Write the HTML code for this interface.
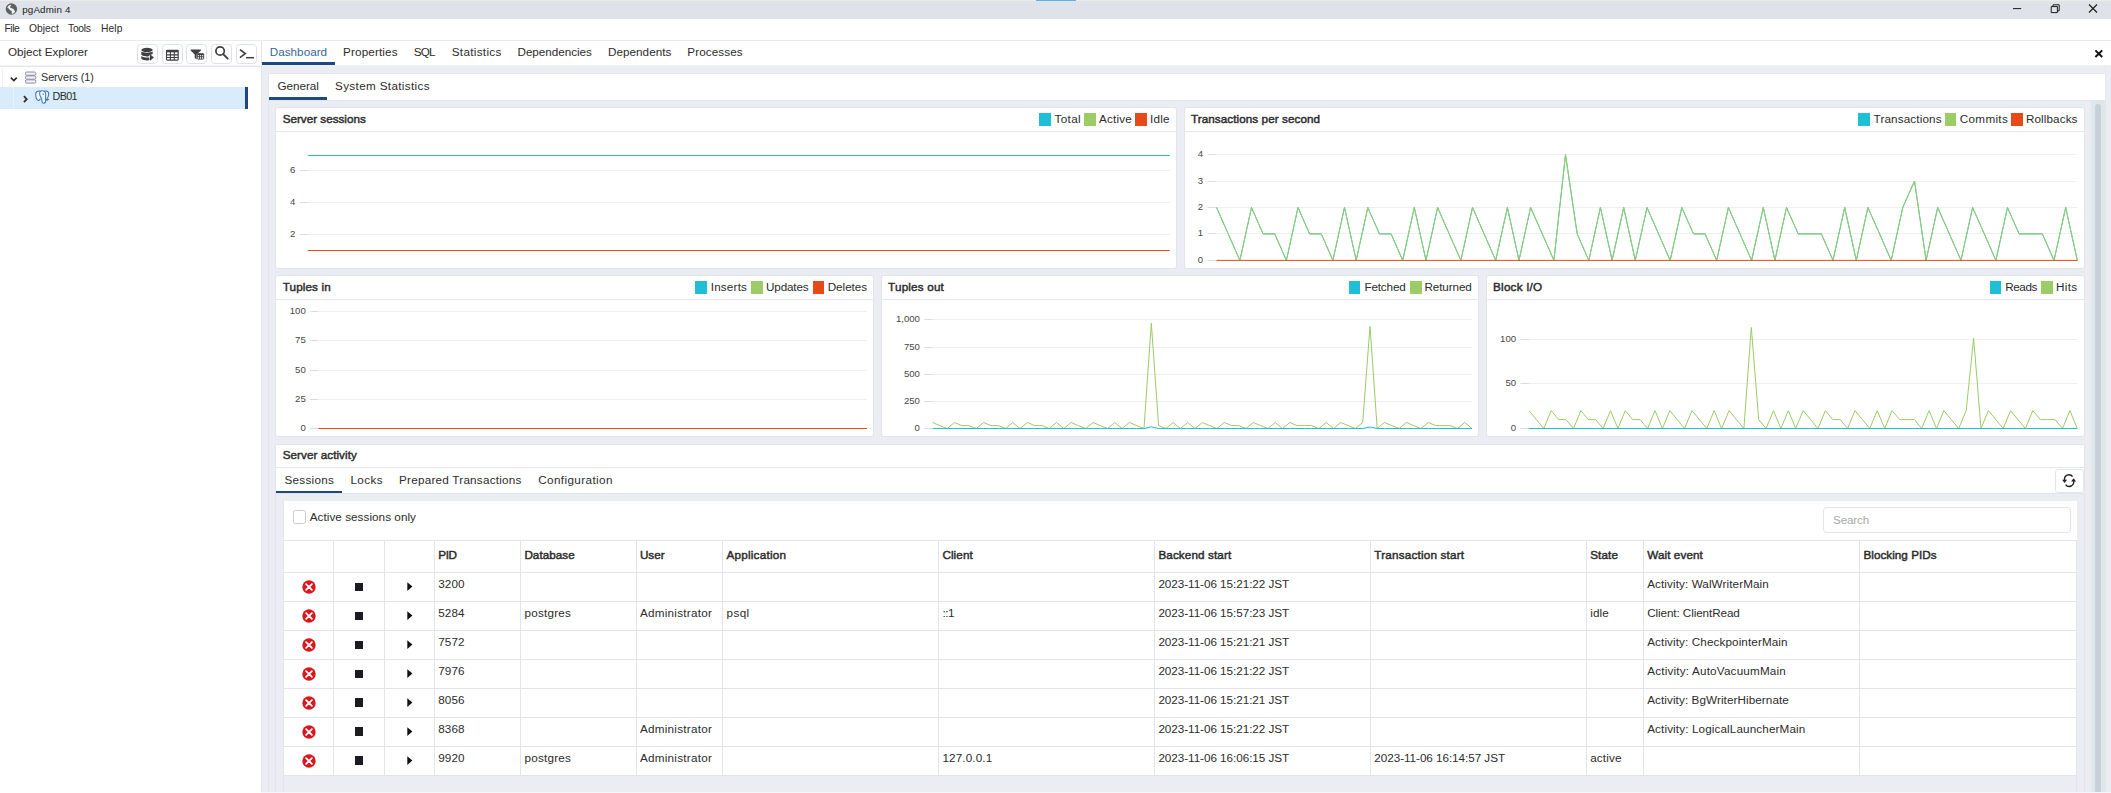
<!DOCTYPE html>
<html><head><meta charset="utf-8"><title>pgAdmin 4</title>
<style>
html,body{margin:0;padding:0;}
body{width:2111px;height:793px;overflow:hidden;position:relative;background:#fff;font-family:"Liberation Sans",sans-serif;}
.b{position:absolute;box-sizing:border-box;}
.t{position:absolute;white-space:pre;}
#charts{position:absolute;left:0;top:0;}
</style></head><body>
<div class="b" style="left:0.00px;top:0.00px;width:2111.00px;height:19.00px;background:#dfe3e9;"></div>
<div class="b" style="left:0.00px;top:0.00px;width:2111.00px;height:1.00px;background:#ececee;"></div>
<div class="b" style="left:1036.00px;top:0.00px;width:40.00px;height:1.00px;background:#5ab4e6;"></div>
<span class="t" style="left:22.20px;top:4.60px;font-size:9.8px;line-height:9.8px;color:#1a1a1a;letter-spacing:0.168px;">pgAdmin 4</span>
<div class="b" style="left:0.00px;top:19.00px;width:2111.00px;height:21.00px;background:#fff;"></div>
<div class="b" style="left:0.00px;top:40.00px;width:2111.00px;height:1.00px;background:#e9eaf1;"></div>
<span class="t" style="left:4.50px;top:23.88px;font-size:10.3px;line-height:10.3px;color:#2c2c2c;letter-spacing:-0.432px;">File</span>
<span class="t" style="left:29.10px;top:23.88px;font-size:10.3px;line-height:10.3px;color:#2c2c2c;letter-spacing:-0.014px;">Object</span>
<span class="t" style="left:68.00px;top:23.88px;font-size:10.3px;line-height:10.3px;color:#2c2c2c;letter-spacing:-0.261px;">Tools</span>
<span class="t" style="left:101.00px;top:23.88px;font-size:10.3px;line-height:10.3px;color:#2c2c2c;letter-spacing:0.072px;">Help</span>
<div class="b" style="left:0.00px;top:41.00px;width:261.00px;height:752.00px;background:#fff;"></div>
<div class="b" style="left:0.00px;top:65.00px;width:260.00px;height:1.00px;background:#f3f4f7;"></div>
<div class="b" style="left:0.00px;top:66.00px;width:260.00px;height:1.00px;background:#e3e6ec;"></div>
<span class="t" style="left:8.00px;top:46.00px;font-size:11.7px;line-height:11.7px;color:#2c2c2c;letter-spacing:-0.052px;">Object Explorer</span>
<div class="b" style="left:136.90px;top:44.00px;width:21.00px;height:20.00px;border:1px solid #dde2ea;border-radius:3.5px;background:#fff;"></div>
<div class="b" style="left:161.75px;top:44.00px;width:21.00px;height:20.00px;border:1px solid #dde2ea;border-radius:3.5px;background:#fff;"></div>
<div class="b" style="left:186.25px;top:44.00px;width:21.00px;height:20.00px;border:1px solid #dde2ea;border-radius:3.5px;background:#fff;"></div>
<div class="b" style="left:210.90px;top:44.00px;width:21.00px;height:20.00px;border:1px solid #dde2ea;border-radius:3.5px;background:#fff;"></div>
<div class="b" style="left:235.90px;top:44.00px;width:21.00px;height:20.00px;border:1px solid #dde2ea;border-radius:3.5px;background:#fff;"></div>
<div class="b" style="left:2.00px;top:69.00px;width:1.00px;height:39.70px;background:#eef0f3;"></div>
<div class="b" style="left:0.00px;top:86.80px;width:247.60px;height:21.90px;background:#d9ecfb;"></div>
<div class="b" style="left:245.00px;top:86.80px;width:2.60px;height:21.90px;background:#1f477c;"></div>
<div class="b" style="left:13.00px;top:86.80px;width:1.00px;height:21.90px;background:#e8f4fc;"></div>
<span class="t" style="left:41.00px;top:71.61px;font-size:10.8px;line-height:10.8px;color:#2c2c2c;letter-spacing:-0.061px;">Servers (1)</span>
<span class="t" style="left:52.60px;top:91.11px;font-size:10.8px;line-height:10.8px;color:#2c2c2c;letter-spacing:-0.672px;">DB01</span>
<div class="b" style="left:261.00px;top:41.00px;width:1850.00px;height:24.00px;background:#fff;"></div>
<div class="b" style="left:261.00px;top:65.00px;width:1850.00px;height:728.00px;background:#ecedf2;"></div>
<div class="b" style="left:261.00px;top:65.00px;width:1850.00px;height:1.00px;background:#eef0f4;"></div>
<div class="b" style="left:261px;top:41px;width:1px;height:752px;background:#dfe5ea"></div>
<div class="b" style="left:261.00px;top:792.00px;width:1850.00px;height:1.00px;background:#f5f6f9;"></div>
<span class="t" style="left:269.75px;top:46.10px;font-size:11.7px;line-height:11.7px;color:#36679a;letter-spacing:0.020px;">Dashboard</span>
<span class="t" style="left:343.00px;top:46.10px;font-size:11.7px;line-height:11.7px;color:#2c2c2c;letter-spacing:0.147px;">Properties</span>
<span class="t" style="left:413.75px;top:46.10px;font-size:11.7px;line-height:11.7px;color:#2c2c2c;letter-spacing:-0.756px;">SQL</span>
<span class="t" style="left:451.75px;top:46.10px;font-size:11.7px;line-height:11.7px;color:#2c2c2c;letter-spacing:0.315px;">Statistics</span>
<span class="t" style="left:517.50px;top:46.10px;font-size:11.7px;line-height:11.7px;color:#2c2c2c;letter-spacing:-0.037px;">Dependencies</span>
<span class="t" style="left:608.00px;top:46.10px;font-size:11.7px;line-height:11.7px;color:#2c2c2c;letter-spacing:0.033px;">Dependents</span>
<span class="t" style="left:687.25px;top:46.10px;font-size:11.7px;line-height:11.7px;color:#2c2c2c;letter-spacing:0.097px;">Processes</span>
<div class="b" style="left:261.50px;top:62.25px;width:73.25px;height:2.65px;background:#1c4a80;"></div>
<div class="b" style="left:268.50px;top:73.80px;width:1836.30px;height:26.00px;background:#fff;box-shadow:0 0 0 1px #e3e7ed;"></div>
<span class="t" style="left:277.50px;top:79.70px;font-size:11.7px;line-height:11.7px;color:#2c2c2c;letter-spacing:-0.038px;">General</span>
<span class="t" style="left:335.00px;top:79.70px;font-size:11.7px;line-height:11.7px;color:#2c2c2c;letter-spacing:0.349px;">System Statistics</span>
<div class="b" style="left:269.00px;top:97.25px;width:58.25px;height:2.55px;background:#1c4a80;"></div>
<div class="b" style="left:2091.00px;top:100.00px;width:14.00px;height:692.00px;background:#e0e7eb;"></div>
<div class="b" style="left:2105px;top:66px;width:1px;height:726px;background:#e3e8ec"></div>
<div class="b" style="left:2094.50px;top:104.00px;width:6.50px;height:688.00px;background:#c8d0db;border-radius:3px 3px 0 0;"></div>
<div class="b" style="left:268px;top:100px;width:1px;height:692px;background:#e0e6eb"></div>
<div class="b" style="left:276.30px;top:107.80px;width:899.90px;height:159.90px;background:#fff;box-shadow:0 0 0 1px #e1e5eb;border-radius:2px;"></div>
<div class="b" style="left:276px;top:131px;width:900px;height:1px;background:#e4e7ed"></div>
<span class="t" style="left:282.70px;top:112.80px;font-size:11.7px;line-height:11.7px;color:#2c2c2c;letter-spacing:-0.002px;-webkit-text-stroke:0.45px currentColor;">Server sessions</span>
<div class="b" style="left:1039.30px;top:112.60px;width:11.80px;height:13.30px;background:#1fbfd6;"></div>
<span class="t" style="left:1054.40px;top:112.80px;font-size:11.7px;line-height:11.7px;color:#2c2c2c;letter-spacing:0.396px;">Total</span>
<div class="b" style="left:1084.00px;top:112.60px;width:11.80px;height:13.30px;background:#9ccc65;"></div>
<span class="t" style="left:1099.10px;top:112.80px;font-size:11.7px;line-height:11.7px;color:#2c2c2c;letter-spacing:0.188px;">Active</span>
<div class="b" style="left:1135.20px;top:112.60px;width:11.80px;height:13.30px;background:#e64a19;"></div>
<span class="t" style="left:1150.10px;top:112.80px;font-size:11.7px;line-height:11.7px;color:#2c2c2c;letter-spacing:0.179px;">Idle</span>
<div class="b" style="left:1184.50px;top:107.80px;width:899.50px;height:159.90px;background:#fff;box-shadow:0 0 0 1px #e1e5eb;border-radius:2px;"></div>
<div class="b" style="left:1184px;top:131px;width:900px;height:1px;background:#e4e7ed"></div>
<span class="t" style="left:1190.90px;top:112.80px;font-size:11.7px;line-height:11.7px;color:#2c2c2c;letter-spacing:0.073px;-webkit-text-stroke:0.45px currentColor;">Transactions per second</span>
<div class="b" style="left:1857.90px;top:112.60px;width:11.80px;height:13.30px;background:#1fbfd6;"></div>
<span class="t" style="left:1873.60px;top:112.80px;font-size:11.7px;line-height:11.7px;color:#2c2c2c;letter-spacing:0.132px;">Transactions</span>
<div class="b" style="left:1944.70px;top:112.60px;width:11.80px;height:13.30px;background:#9ccc65;"></div>
<span class="t" style="left:1959.80px;top:112.80px;font-size:11.7px;line-height:11.7px;color:#2c2c2c;letter-spacing:0.308px;">Commits</span>
<div class="b" style="left:2011.30px;top:112.60px;width:11.80px;height:13.30px;background:#e64a19;"></div>
<span class="t" style="left:2025.90px;top:112.80px;font-size:11.7px;line-height:11.7px;color:#2c2c2c;letter-spacing:0.110px;">Rollbacks</span>
<div class="b" style="left:276.30px;top:276.20px;width:597.20px;height:160.00px;background:#fff;box-shadow:0 0 0 1px #e1e5eb;border-radius:2px;"></div>
<div class="b" style="left:276px;top:299px;width:598px;height:1px;background:#e4e7ed"></div>
<span class="t" style="left:282.70px;top:281.20px;font-size:11.7px;line-height:11.7px;color:#2c2c2c;letter-spacing:0.120px;-webkit-text-stroke:0.45px currentColor;">Tuples in</span>
<div class="b" style="left:695.10px;top:281.00px;width:11.80px;height:13.30px;background:#1fbfd6;"></div>
<span class="t" style="left:710.70px;top:281.20px;font-size:11.7px;line-height:11.7px;color:#2c2c2c;letter-spacing:0.198px;">Inserts</span>
<div class="b" style="left:750.80px;top:281.00px;width:11.80px;height:13.30px;background:#9ccc65;"></div>
<span class="t" style="left:766.00px;top:281.20px;font-size:11.7px;line-height:11.7px;color:#2c2c2c;letter-spacing:-0.146px;">Updates</span>
<div class="b" style="left:812.60px;top:281.00px;width:11.80px;height:13.30px;background:#e64a19;"></div>
<span class="t" style="left:827.70px;top:281.20px;font-size:11.7px;line-height:11.7px;color:#2c2c2c;letter-spacing:-0.029px;">Deletes</span>
<div class="b" style="left:881.70px;top:276.20px;width:596.80px;height:160.00px;background:#fff;box-shadow:0 0 0 1px #e1e5eb;border-radius:2px;"></div>
<div class="b" style="left:882px;top:299px;width:596px;height:1px;background:#e4e7ed"></div>
<span class="t" style="left:888.10px;top:281.20px;font-size:11.7px;line-height:11.7px;color:#2c2c2c;letter-spacing:0.178px;-webkit-text-stroke:0.45px currentColor;">Tuples out</span>
<div class="b" style="left:1348.70px;top:281.00px;width:11.80px;height:13.30px;background:#1fbfd6;"></div>
<span class="t" style="left:1364.40px;top:281.20px;font-size:11.7px;line-height:11.7px;color:#2c2c2c;letter-spacing:-0.146px;">Fetched</span>
<div class="b" style="left:1410.40px;top:281.00px;width:11.80px;height:13.30px;background:#9ccc65;"></div>
<span class="t" style="left:1424.50px;top:281.20px;font-size:11.7px;line-height:11.7px;color:#2c2c2c;letter-spacing:-0.105px;">Returned</span>
<div class="b" style="left:1486.70px;top:276.20px;width:597.30px;height:160.00px;background:#fff;box-shadow:0 0 0 1px #e1e5eb;border-radius:2px;"></div>
<div class="b" style="left:1487px;top:299px;width:597px;height:1px;background:#e4e7ed"></div>
<span class="t" style="left:1493.10px;top:281.20px;font-size:11.7px;line-height:11.7px;color:#2c2c2c;letter-spacing:0.205px;-webkit-text-stroke:0.45px currentColor;">Block I/O</span>
<div class="b" style="left:1989.50px;top:281.00px;width:11.80px;height:13.30px;background:#1fbfd6;"></div>
<span class="t" style="left:2005.20px;top:281.20px;font-size:11.7px;line-height:11.7px;color:#2c2c2c;letter-spacing:-0.380px;">Reads</span>
<div class="b" style="left:2040.90px;top:281.00px;width:11.80px;height:13.30px;background:#9ccc65;"></div>
<span class="t" style="left:2056.00px;top:281.20px;font-size:11.7px;line-height:11.7px;color:#2c2c2c;letter-spacing:0.350px;">Hits</span>
<span class="t" style="left:289.96px;top:164.77px;font-size:9.6px;line-height:9.6px;color:#484848;">6</span>
<span class="t" style="left:289.96px;top:196.77px;font-size:9.6px;line-height:9.6px;color:#484848;">4</span>
<span class="t" style="left:289.96px;top:228.77px;font-size:9.6px;line-height:9.6px;color:#484848;">2</span>
<span class="t" style="left:1197.86px;top:254.77px;font-size:9.6px;line-height:9.6px;color:#484848;">0</span>
<span class="t" style="left:1197.86px;top:227.77px;font-size:9.6px;line-height:9.6px;color:#484848;">1</span>
<span class="t" style="left:1197.86px;top:201.77px;font-size:9.6px;line-height:9.6px;color:#484848;">2</span>
<span class="t" style="left:1197.86px;top:175.77px;font-size:9.6px;line-height:9.6px;color:#484848;">3</span>
<span class="t" style="left:1197.86px;top:148.77px;font-size:9.6px;line-height:9.6px;color:#484848;">4</span>
<span class="t" style="left:289.78px;top:305.77px;font-size:9.6px;line-height:9.6px;color:#484848;">100</span>
<span class="t" style="left:295.12px;top:334.77px;font-size:9.6px;line-height:9.6px;color:#484848;">75</span>
<span class="t" style="left:295.12px;top:364.77px;font-size:9.6px;line-height:9.6px;color:#484848;">50</span>
<span class="t" style="left:295.12px;top:393.77px;font-size:9.6px;line-height:9.6px;color:#484848;">25</span>
<span class="t" style="left:300.46px;top:422.77px;font-size:9.6px;line-height:9.6px;color:#484848;">0</span>
<span class="t" style="left:895.88px;top:313.77px;font-size:9.6px;line-height:9.6px;color:#484848;">1,000</span>
<span class="t" style="left:903.88px;top:341.77px;font-size:9.6px;line-height:9.6px;color:#484848;">750</span>
<span class="t" style="left:903.88px;top:368.77px;font-size:9.6px;line-height:9.6px;color:#484848;">500</span>
<span class="t" style="left:903.88px;top:395.77px;font-size:9.6px;line-height:9.6px;color:#484848;">250</span>
<span class="t" style="left:914.56px;top:422.77px;font-size:9.6px;line-height:9.6px;color:#484848;">0</span>
<span class="t" style="left:1500.08px;top:333.77px;font-size:9.6px;line-height:9.6px;color:#484848;">100</span>
<span class="t" style="left:1505.42px;top:377.77px;font-size:9.6px;line-height:9.6px;color:#484848;">50</span>
<span class="t" style="left:1510.76px;top:422.77px;font-size:9.6px;line-height:9.6px;color:#484848;">0</span>
<div class="b" style="left:276.30px;top:445.00px;width:1807.70px;height:48.20px;background:#fff;box-shadow:0 0 0 1px #e1e5eb;"></div>
<div class="b" style="left:276px;top:467px;width:1808px;height:1px;background:#e4e7ed"></div>
<span class="t" style="left:282.70px;top:449.30px;font-size:11.7px;line-height:11.7px;color:#2c2c2c;letter-spacing:0.052px;-webkit-text-stroke:0.45px currentColor;">Server activity</span>
<span class="t" style="left:284.40px;top:474.10px;font-size:11.7px;line-height:11.7px;color:#2c2c2c;letter-spacing:0.304px;">Sessions</span>
<span class="t" style="left:350.40px;top:474.10px;font-size:11.7px;line-height:11.7px;color:#2c2c2c;letter-spacing:0.434px;">Locks</span>
<span class="t" style="left:399.10px;top:474.10px;font-size:11.7px;line-height:11.7px;color:#2c2c2c;letter-spacing:0.234px;">Prepared Transactions</span>
<span class="t" style="left:538.20px;top:474.10px;font-size:11.7px;line-height:11.7px;color:#2c2c2c;letter-spacing:0.400px;">Configuration</span>
<div class="b" style="left:276.30px;top:490.70px;width:65.80px;height:2.50px;background:#1c4a80;"></div>
<div class="b" style="left:2055.00px;top:468.50px;width:28.50px;height:24.70px;background:#fff;border:1px solid #e3e6ec;border-radius:3px;"></div>
<div class="b" style="left:275px;top:493px;width:1px;height:299px;background:#e0e6eb"></div>
<div class="b" style="left:2084px;top:493px;width:1px;height:299px;background:#e0e6eb"></div>
<div class="b" style="left:2076px;top:775px;width:1px;height:17px;background:#e0e6eb"></div>
<div class="b" style="left:283.00px;top:501.00px;width:1794.00px;height:274.50px;background:#fff;"></div>
<div class="b" style="left:283px;top:501px;width:1px;height:291px;background:#e0e6eb"></div>
<div class="b" style="left:292.60px;top:510.30px;width:13.40px;height:13.40px;background:#fff;border:1px solid #c9cdd4;border-radius:2.5px;"></div>
<span class="t" style="left:309.70px;top:511.20px;font-size:11.7px;line-height:11.7px;color:#2c2c2c;letter-spacing:0.055px;">Active sessions only</span>
<div class="b" style="left:1823.00px;top:507.00px;width:248.00px;height:26.00px;background:#fff;border:1px solid #e2e5eb;border-radius:4px;"></div>
<span class="t" style="left:1833.10px;top:513.70px;font-size:11.7px;line-height:11.7px;color:#a9a9a9;letter-spacing:-0.195px;">Search</span>
<div class="b" style="left:283px;top:540px;width:1794px;height:1px;background:#e1e4ea"></div>
<div class="b" style="left:283px;top:572px;width:1794px;height:1px;background:#e1e4ea"></div>
<div class="b" style="left:283px;top:601px;width:1794px;height:1px;background:#e1e4ea"></div>
<div class="b" style="left:283px;top:630px;width:1794px;height:1px;background:#e1e4ea"></div>
<div class="b" style="left:283px;top:659px;width:1794px;height:1px;background:#e1e4ea"></div>
<div class="b" style="left:283px;top:688px;width:1794px;height:1px;background:#e1e4ea"></div>
<div class="b" style="left:283px;top:717px;width:1794px;height:1px;background:#e1e4ea"></div>
<div class="b" style="left:283px;top:746px;width:1794px;height:1px;background:#e1e4ea"></div>
<div class="b" style="left:283px;top:775px;width:1794px;height:1px;background:#e1e4ea"></div>
<div class="b" style="left:283px;top:540px;width:1px;height:236px;background:#e1e4ea"></div>
<div class="b" style="left:333px;top:540px;width:1px;height:236px;background:#e1e4ea"></div>
<div class="b" style="left:384px;top:540px;width:1px;height:236px;background:#e1e4ea"></div>
<div class="b" style="left:434px;top:540px;width:1px;height:236px;background:#e1e4ea"></div>
<div class="b" style="left:520px;top:540px;width:1px;height:236px;background:#e1e4ea"></div>
<div class="b" style="left:636px;top:540px;width:1px;height:236px;background:#e1e4ea"></div>
<div class="b" style="left:722px;top:540px;width:1px;height:236px;background:#e1e4ea"></div>
<div class="b" style="left:938px;top:540px;width:1px;height:236px;background:#e1e4ea"></div>
<div class="b" style="left:1154px;top:540px;width:1px;height:236px;background:#e1e4ea"></div>
<div class="b" style="left:1370px;top:540px;width:1px;height:236px;background:#e1e4ea"></div>
<div class="b" style="left:1586px;top:540px;width:1px;height:236px;background:#e1e4ea"></div>
<div class="b" style="left:1643px;top:540px;width:1px;height:236px;background:#e1e4ea"></div>
<div class="b" style="left:1859px;top:540px;width:1px;height:236px;background:#e1e4ea"></div>
<div class="b" style="left:2076px;top:540px;width:1px;height:236px;background:#e1e4ea"></div>
<span class="t" style="left:438.30px;top:549.10px;font-size:11.7px;line-height:11.7px;color:#2c2c2c;letter-spacing:-0.402px;-webkit-text-stroke:0.45px currentColor;">PID</span>
<span class="t" style="left:524.40px;top:549.10px;font-size:11.7px;line-height:11.7px;color:#2c2c2c;letter-spacing:0.031px;-webkit-text-stroke:0.45px currentColor;">Database</span>
<span class="t" style="left:639.90px;top:549.10px;font-size:11.7px;line-height:11.7px;color:#2c2c2c;letter-spacing:0.032px;-webkit-text-stroke:0.45px currentColor;">User</span>
<span class="t" style="left:726.50px;top:549.10px;font-size:11.7px;line-height:11.7px;color:#2c2c2c;letter-spacing:0.226px;-webkit-text-stroke:0.45px currentColor;">Application</span>
<span class="t" style="left:942.40px;top:549.10px;font-size:11.7px;line-height:11.7px;color:#2c2c2c;letter-spacing:0.097px;-webkit-text-stroke:0.45px currentColor;">Client</span>
<span class="t" style="left:1158.40px;top:549.10px;font-size:11.7px;line-height:11.7px;color:#2c2c2c;letter-spacing:0.113px;-webkit-text-stroke:0.45px currentColor;">Backend start</span>
<span class="t" style="left:1374.30px;top:549.10px;font-size:11.7px;line-height:11.7px;color:#2c2c2c;letter-spacing:0.200px;-webkit-text-stroke:0.45px currentColor;">Transaction start</span>
<span class="t" style="left:1590.20px;top:549.10px;font-size:11.7px;line-height:11.7px;color:#2c2c2c;letter-spacing:0.120px;-webkit-text-stroke:0.45px currentColor;">State</span>
<span class="t" style="left:1647.20px;top:549.10px;font-size:11.7px;line-height:11.7px;color:#2c2c2c;letter-spacing:0.096px;-webkit-text-stroke:0.45px currentColor;">Wait event</span>
<span class="t" style="left:1863.50px;top:549.10px;font-size:11.7px;line-height:11.7px;color:#2c2c2c;letter-spacing:0.023px;-webkit-text-stroke:0.45px currentColor;">Blocking PIDs</span>
<span class="t" style="left:438.30px;top:578.30px;font-size:11.7px;line-height:11.7px;color:#2c2c2c;letter-spacing:0.057px;">3200</span>
<span class="t" style="left:1158.40px;top:578.30px;font-size:11.7px;line-height:11.7px;color:#2c2c2c;letter-spacing:-0.042px;">2023-11-06 15:21:22 JST</span>
<span class="t" style="left:1647.20px;top:578.30px;font-size:11.7px;line-height:11.7px;color:#2c2c2c;letter-spacing:0.095px;">Activity: WalWriterMain</span>
<svg class="b" style="left:301.5px;top:579.8px" width="14" height="14" viewBox="0 0 14 14"><circle cx="7" cy="7" r="6.7" fill="#d7191f"/><path d="M4.1 4.1l5.800 5.800M9.900 4.100l-5.800 5.800" stroke="#fff" stroke-width="1.700" stroke-linecap="round" fill="none"/></svg>
<div class="b" style="left:354.70px;top:582.65px;width:8.30px;height:8.30px;background:#1b1b22;"></div>
<svg class="b" style="left:406.6px;top:582.2px" width="6" height="9.2" viewBox="0 0 6 9.2"><path d="M0.3 0.3L5.4 4.6L0.3 8.9z" fill="#111"/></svg>
<span class="t" style="left:438.30px;top:607.26px;font-size:11.7px;line-height:11.7px;color:#2c2c2c;letter-spacing:0.057px;">5284</span>
<span class="t" style="left:524.40px;top:607.26px;font-size:11.7px;line-height:11.7px;color:#2c2c2c;letter-spacing:0.246px;">postgres</span>
<span class="t" style="left:639.90px;top:607.26px;font-size:11.7px;line-height:11.7px;color:#2c2c2c;letter-spacing:0.256px;">Administrator</span>
<span class="t" style="left:726.50px;top:607.26px;font-size:11.7px;line-height:11.7px;color:#2c2c2c;letter-spacing:0.412px;">psql</span>
<span class="t" style="left:942.40px;top:607.26px;font-size:11.7px;line-height:11.7px;color:#2c2c2c;letter-spacing:-0.404px;">::1</span>
<span class="t" style="left:1158.40px;top:607.26px;font-size:11.7px;line-height:11.7px;color:#2c2c2c;letter-spacing:-0.042px;">2023-11-06 15:57:23 JST</span>
<span class="t" style="left:1590.20px;top:607.26px;font-size:11.7px;line-height:11.7px;color:#2c2c2c;letter-spacing:0.095px;">idle</span>
<span class="t" style="left:1647.20px;top:607.26px;font-size:11.7px;line-height:11.7px;color:#2c2c2c;letter-spacing:-0.094px;">Client: ClientRead</span>
<svg class="b" style="left:301.5px;top:608.8px" width="14" height="14" viewBox="0 0 14 14"><circle cx="7" cy="7" r="6.7" fill="#d7191f"/><path d="M4.1 4.1l5.800 5.800M9.900 4.100l-5.800 5.800" stroke="#fff" stroke-width="1.700" stroke-linecap="round" fill="none"/></svg>
<div class="b" style="left:354.70px;top:611.61px;width:8.30px;height:8.30px;background:#1b1b22;"></div>
<svg class="b" style="left:406.6px;top:611.2px" width="6" height="9.2" viewBox="0 0 6 9.2"><path d="M0.3 0.3L5.4 4.6L0.3 8.9z" fill="#111"/></svg>
<span class="t" style="left:438.30px;top:636.22px;font-size:11.7px;line-height:11.7px;color:#2c2c2c;letter-spacing:0.057px;">7572</span>
<span class="t" style="left:1158.40px;top:636.22px;font-size:11.7px;line-height:11.7px;color:#2c2c2c;letter-spacing:-0.042px;">2023-11-06 15:21:21 JST</span>
<span class="t" style="left:1647.20px;top:636.22px;font-size:11.7px;line-height:11.7px;color:#2c2c2c;letter-spacing:0.106px;">Activity: CheckpointerMain</span>
<svg class="b" style="left:301.5px;top:637.7px" width="14" height="14" viewBox="0 0 14 14"><circle cx="7" cy="7" r="6.7" fill="#d7191f"/><path d="M4.1 4.1l5.800 5.800M9.900 4.100l-5.800 5.800" stroke="#fff" stroke-width="1.700" stroke-linecap="round" fill="none"/></svg>
<div class="b" style="left:354.70px;top:640.57px;width:8.30px;height:8.30px;background:#1b1b22;"></div>
<svg class="b" style="left:406.6px;top:640.1px" width="6" height="9.2" viewBox="0 0 6 9.2"><path d="M0.3 0.3L5.4 4.6L0.3 8.9z" fill="#111"/></svg>
<span class="t" style="left:438.30px;top:665.18px;font-size:11.7px;line-height:11.7px;color:#2c2c2c;letter-spacing:0.057px;">7976</span>
<span class="t" style="left:1158.40px;top:665.18px;font-size:11.7px;line-height:11.7px;color:#2c2c2c;letter-spacing:-0.042px;">2023-11-06 15:21:22 JST</span>
<span class="t" style="left:1647.20px;top:665.18px;font-size:11.7px;line-height:11.7px;color:#2c2c2c;letter-spacing:0.192px;">Activity: AutoVacuumMain</span>
<svg class="b" style="left:301.5px;top:666.7px" width="14" height="14" viewBox="0 0 14 14"><circle cx="7" cy="7" r="6.7" fill="#d7191f"/><path d="M4.1 4.1l5.800 5.800M9.900 4.100l-5.800 5.800" stroke="#fff" stroke-width="1.700" stroke-linecap="round" fill="none"/></svg>
<div class="b" style="left:354.70px;top:669.53px;width:8.30px;height:8.30px;background:#1b1b22;"></div>
<svg class="b" style="left:406.6px;top:669.1px" width="6" height="9.2" viewBox="0 0 6 9.2"><path d="M0.3 0.3L5.4 4.6L0.3 8.9z" fill="#111"/></svg>
<span class="t" style="left:438.30px;top:694.14px;font-size:11.7px;line-height:11.7px;color:#2c2c2c;letter-spacing:0.057px;">8056</span>
<span class="t" style="left:1158.40px;top:694.14px;font-size:11.7px;line-height:11.7px;color:#2c2c2c;letter-spacing:-0.042px;">2023-11-06 15:21:21 JST</span>
<span class="t" style="left:1647.20px;top:694.14px;font-size:11.7px;line-height:11.7px;color:#2c2c2c;letter-spacing:0.085px;">Activity: BgWriterHibernate</span>
<svg class="b" style="left:301.5px;top:695.6px" width="14" height="14" viewBox="0 0 14 14"><circle cx="7" cy="7" r="6.7" fill="#d7191f"/><path d="M4.1 4.1l5.800 5.800M9.900 4.100l-5.800 5.800" stroke="#fff" stroke-width="1.700" stroke-linecap="round" fill="none"/></svg>
<div class="b" style="left:354.70px;top:698.49px;width:8.30px;height:8.30px;background:#1b1b22;"></div>
<svg class="b" style="left:406.6px;top:698.0px" width="6" height="9.2" viewBox="0 0 6 9.2"><path d="M0.3 0.3L5.4 4.6L0.3 8.9z" fill="#111"/></svg>
<span class="t" style="left:438.30px;top:723.10px;font-size:11.7px;line-height:11.7px;color:#2c2c2c;letter-spacing:0.057px;">8368</span>
<span class="t" style="left:639.90px;top:723.10px;font-size:11.7px;line-height:11.7px;color:#2c2c2c;letter-spacing:0.256px;">Administrator</span>
<span class="t" style="left:1158.40px;top:723.10px;font-size:11.7px;line-height:11.7px;color:#2c2c2c;letter-spacing:-0.042px;">2023-11-06 15:21:22 JST</span>
<span class="t" style="left:1647.20px;top:723.10px;font-size:11.7px;line-height:11.7px;color:#2c2c2c;letter-spacing:0.122px;">Activity: LogicalLauncherMain</span>
<svg class="b" style="left:301.5px;top:724.6px" width="14" height="14" viewBox="0 0 14 14"><circle cx="7" cy="7" r="6.7" fill="#d7191f"/><path d="M4.1 4.1l5.800 5.800M9.900 4.100l-5.800 5.800" stroke="#fff" stroke-width="1.700" stroke-linecap="round" fill="none"/></svg>
<div class="b" style="left:354.70px;top:727.45px;width:8.30px;height:8.30px;background:#1b1b22;"></div>
<svg class="b" style="left:406.6px;top:727.0px" width="6" height="9.2" viewBox="0 0 6 9.2"><path d="M0.3 0.3L5.4 4.6L0.3 8.9z" fill="#111"/></svg>
<span class="t" style="left:438.30px;top:752.06px;font-size:11.7px;line-height:11.7px;color:#2c2c2c;letter-spacing:0.057px;">9920</span>
<span class="t" style="left:524.40px;top:752.06px;font-size:11.7px;line-height:11.7px;color:#2c2c2c;letter-spacing:0.246px;">postgres</span>
<span class="t" style="left:639.90px;top:752.06px;font-size:11.7px;line-height:11.7px;color:#2c2c2c;letter-spacing:0.256px;">Administrator</span>
<span class="t" style="left:942.40px;top:752.06px;font-size:11.7px;line-height:11.7px;color:#2c2c2c;letter-spacing:0.138px;">127.0.0.1</span>
<span class="t" style="left:1158.40px;top:752.06px;font-size:11.7px;line-height:11.7px;color:#2c2c2c;letter-spacing:-0.042px;">2023-11-06 16:06:15 JST</span>
<span class="t" style="left:1374.30px;top:752.06px;font-size:11.7px;line-height:11.7px;color:#2c2c2c;letter-spacing:-0.042px;">2023-11-06 16:14:57 JST</span>
<span class="t" style="left:1590.20px;top:752.06px;font-size:11.7px;line-height:11.7px;color:#2c2c2c;letter-spacing:0.147px;">active</span>
<svg class="b" style="left:301.5px;top:753.6px" width="14" height="14" viewBox="0 0 14 14"><circle cx="7" cy="7" r="6.7" fill="#d7191f"/><path d="M4.1 4.1l5.800 5.800M9.900 4.100l-5.800 5.800" stroke="#fff" stroke-width="1.700" stroke-linecap="round" fill="none"/></svg>
<div class="b" style="left:354.70px;top:756.41px;width:8.30px;height:8.30px;background:#1b1b22;"></div>
<svg class="b" style="left:406.6px;top:756.0px" width="6" height="9.2" viewBox="0 0 6 9.2"><path d="M0.3 0.3L5.4 4.6L0.3 8.9z" fill="#111"/></svg>
<svg id="charts" width="2111" height="793" viewBox="0 0 2111 793">
<line x1="299.7" x2="307.7" y1="170.50" y2="170.50" stroke="#dcdcdc" stroke-width="1"/>
<line x1="307.7" x2="1169.9" y1="170.50" y2="170.50" stroke="#efefef" stroke-width="1"/>
<line x1="299.7" x2="307.7" y1="202.50" y2="202.50" stroke="#dcdcdc" stroke-width="1"/>
<line x1="307.7" x2="1169.9" y1="202.50" y2="202.50" stroke="#efefef" stroke-width="1"/>
<line x1="299.7" x2="307.7" y1="234.50" y2="234.50" stroke="#dcdcdc" stroke-width="1"/>
<line x1="307.7" x2="1169.9" y1="234.50" y2="234.50" stroke="#efefef" stroke-width="1"/>
<polyline fill="none" stroke="#e64a19" stroke-width="1.0" stroke-linejoin="round" points="307.7,250.5 1169.9,250.5"/>
<polyline fill="none" stroke="#1fbfd6" stroke-width="1.0" stroke-linejoin="round" points="307.7,155.5 1169.9,155.5"/>
<line x1="1207.6" x2="1215.8" y1="260.50" y2="260.50" stroke="#dcdcdc" stroke-width="1"/>
<line x1="1215.8" x2="2077.3" y1="260.50" y2="260.50" stroke="#efefef" stroke-width="1"/>
<line x1="1207.6" x2="1215.8" y1="233.50" y2="233.50" stroke="#dcdcdc" stroke-width="1"/>
<line x1="1215.8" x2="2077.3" y1="233.50" y2="233.50" stroke="#efefef" stroke-width="1"/>
<line x1="1207.6" x2="1215.8" y1="207.50" y2="207.50" stroke="#dcdcdc" stroke-width="1"/>
<line x1="1215.8" x2="2077.3" y1="207.50" y2="207.50" stroke="#efefef" stroke-width="1"/>
<line x1="1207.6" x2="1215.8" y1="181.50" y2="181.50" stroke="#dcdcdc" stroke-width="1"/>
<line x1="1215.8" x2="2077.3" y1="181.50" y2="181.50" stroke="#efefef" stroke-width="1"/>
<line x1="1207.6" x2="1215.8" y1="154.50" y2="154.50" stroke="#dcdcdc" stroke-width="1"/>
<line x1="1215.8" x2="2077.3" y1="154.50" y2="154.50" stroke="#efefef" stroke-width="1"/>
<polyline fill="none" stroke="#1fbfd6" stroke-width="1.0" stroke-linejoin="round" points="1216.6,207.5 1228.2,233.9 1239.9,260.4 1251.5,207.5 1263.1,233.9 1274.8,233.9 1286.4,260.4 1298.0,207.5 1309.6,233.9 1321.3,233.9 1332.9,260.4 1344.5,207.5 1356.2,260.4 1367.8,207.5 1379.4,233.9 1391.1,233.9 1402.7,260.4 1414.3,207.5 1426.0,260.4 1437.6,207.5 1449.2,233.9 1460.9,260.4 1472.5,207.5 1484.1,233.9 1495.7,260.4 1507.4,207.5 1519.0,260.4 1530.6,207.5 1542.3,233.9 1553.9,260.4 1565.5,154.6 1577.2,233.9 1588.8,260.4 1600.4,207.5 1612.1,260.4 1623.7,207.5 1635.3,260.4 1647.0,207.5 1658.6,233.9 1670.2,260.4 1681.8,207.5 1693.5,233.9 1705.1,233.9 1716.7,260.4 1728.4,207.5 1740.0,233.9 1751.6,260.4 1763.3,207.5 1774.9,260.4 1786.5,207.5 1798.2,233.9 1809.8,233.9 1821.4,233.9 1833.0,260.4 1844.7,207.5 1856.3,260.4 1867.9,207.5 1879.6,233.9 1891.2,260.4 1902.8,207.5 1914.5,181.0 1926.1,260.4 1937.7,207.5 1949.4,233.9 1961.0,260.4 1972.6,207.5 1984.3,233.9 1995.9,260.4 2007.5,207.5 2019.1,233.9 2030.8,233.9 2042.4,233.9 2054.0,260.4 2065.7,207.5 2077.3,260.4"/>
<polyline fill="none" stroke="#9ccc65" stroke-width="1.0" stroke-linejoin="round" points="1216.6,207.5 1228.2,233.9 1239.9,260.4 1251.5,207.5 1263.1,233.9 1274.8,233.9 1286.4,260.4 1298.0,207.5 1309.6,233.9 1321.3,233.9 1332.9,260.4 1344.5,207.5 1356.2,260.4 1367.8,207.5 1379.4,233.9 1391.1,233.9 1402.7,260.4 1414.3,207.5 1426.0,260.4 1437.6,207.5 1449.2,233.9 1460.9,260.4 1472.5,207.5 1484.1,233.9 1495.7,260.4 1507.4,207.5 1519.0,260.4 1530.6,207.5 1542.3,233.9 1553.9,260.4 1565.5,154.6 1577.2,233.9 1588.8,260.4 1600.4,207.5 1612.1,260.4 1623.7,207.5 1635.3,260.4 1647.0,207.5 1658.6,233.9 1670.2,260.4 1681.8,207.5 1693.5,233.9 1705.1,233.9 1716.7,260.4 1728.4,207.5 1740.0,233.9 1751.6,260.4 1763.3,207.5 1774.9,260.4 1786.5,207.5 1798.2,233.9 1809.8,233.9 1821.4,233.9 1833.0,260.4 1844.7,207.5 1856.3,260.4 1867.9,207.5 1879.6,233.9 1891.2,260.4 1902.8,207.5 1914.5,181.0 1926.1,260.4 1937.7,207.5 1949.4,233.9 1961.0,260.4 1972.6,207.5 1984.3,233.9 1995.9,260.4 2007.5,207.5 2019.1,233.9 2030.8,233.9 2042.4,233.9 2054.0,260.4 2065.7,207.5 2077.3,260.4"/>
<polyline fill="none" stroke="#e64a19" stroke-width="1.0" stroke-linejoin="round" points="1216.6,260.4 2077.3,260.4"/>
<line x1="310.2" x2="318.5" y1="311.50" y2="311.50" stroke="#dcdcdc" stroke-width="1"/>
<line x1="318.5" x2="867.0" y1="311.50" y2="311.50" stroke="#efefef" stroke-width="1"/>
<line x1="310.2" x2="318.5" y1="340.50" y2="340.50" stroke="#dcdcdc" stroke-width="1"/>
<line x1="318.5" x2="867.0" y1="340.50" y2="340.50" stroke="#efefef" stroke-width="1"/>
<line x1="310.2" x2="318.5" y1="370.50" y2="370.50" stroke="#dcdcdc" stroke-width="1"/>
<line x1="318.5" x2="867.0" y1="370.50" y2="370.50" stroke="#efefef" stroke-width="1"/>
<line x1="310.2" x2="318.5" y1="399.50" y2="399.50" stroke="#dcdcdc" stroke-width="1"/>
<line x1="318.5" x2="867.0" y1="399.50" y2="399.50" stroke="#efefef" stroke-width="1"/>
<line x1="310.2" x2="318.5" y1="428.50" y2="428.50" stroke="#dcdcdc" stroke-width="1"/>
<line x1="318.5" x2="867.0" y1="428.50" y2="428.50" stroke="#efefef" stroke-width="1"/>
<polyline fill="none" stroke="#e64a19" stroke-width="1.0" stroke-linejoin="round" points="318.5,428.5 867.0,428.5"/>
<line x1="924.3" x2="932.6" y1="319.50" y2="319.50" stroke="#dcdcdc" stroke-width="1"/>
<line x1="932.6" x2="1472.0" y1="319.50" y2="319.50" stroke="#efefef" stroke-width="1"/>
<line x1="924.3" x2="932.6" y1="347.50" y2="347.50" stroke="#dcdcdc" stroke-width="1"/>
<line x1="932.6" x2="1472.0" y1="347.50" y2="347.50" stroke="#efefef" stroke-width="1"/>
<line x1="924.3" x2="932.6" y1="374.50" y2="374.50" stroke="#dcdcdc" stroke-width="1"/>
<line x1="932.6" x2="1472.0" y1="374.50" y2="374.50" stroke="#efefef" stroke-width="1"/>
<line x1="924.3" x2="932.6" y1="401.50" y2="401.50" stroke="#dcdcdc" stroke-width="1"/>
<line x1="932.6" x2="1472.0" y1="401.50" y2="401.50" stroke="#efefef" stroke-width="1"/>
<line x1="924.3" x2="932.6" y1="428.50" y2="428.50" stroke="#dcdcdc" stroke-width="1"/>
<line x1="932.6" x2="1472.0" y1="428.50" y2="428.50" stroke="#efefef" stroke-width="1"/>
<polyline fill="none" stroke="#9ccc65" stroke-width="1.0" stroke-linejoin="round" points="932.6,422.5 939.9,425.6 947.2,428.5 954.5,422.5 961.8,425.6 969.0,425.6 976.3,428.5 983.6,422.5 990.9,425.6 998.2,425.6 1005.5,428.5 1012.8,422.5 1020.1,428.5 1027.4,422.5 1034.6,425.6 1041.9,425.6 1049.2,428.5 1056.5,422.5 1063.8,428.5 1071.1,422.5 1078.4,425.6 1085.7,428.5 1093.0,422.5 1100.3,425.6 1107.5,428.5 1114.8,422.5 1122.1,428.5 1129.4,422.5 1136.7,425.6 1144.0,428.5 1151.3,323.2 1158.6,425.6 1165.9,428.5 1173.1,422.5 1180.4,428.5 1187.7,422.5 1195.0,428.5 1202.3,422.5 1209.6,425.6 1216.9,428.5 1224.2,422.5 1231.5,425.6 1238.7,425.6 1246.0,428.5 1253.3,422.5 1260.6,425.6 1267.9,428.5 1275.2,422.5 1282.5,428.5 1289.8,422.5 1297.1,425.6 1304.3,425.6 1311.6,425.6 1318.9,428.5 1326.2,422.5 1333.5,428.5 1340.8,422.5 1348.1,425.6 1355.4,428.5 1362.7,422.5 1370.0,326.4 1377.2,428.5 1384.5,422.5 1391.8,425.6 1399.1,428.5 1406.4,422.5 1413.7,425.6 1421.0,428.5 1428.3,422.5 1435.6,425.6 1442.8,425.6 1450.1,425.6 1457.4,428.5 1464.7,422.5 1472.0,428.5"/>
<polyline fill="none" stroke="#1fbfd6" stroke-width="1.0" stroke-linejoin="round" points="932.6,428.5 939.9,428.5 947.2,428.5 954.5,428.5 961.8,428.5 969.0,428.5 976.3,428.5 983.6,428.5 990.9,428.5 998.2,428.5 1005.5,428.5 1012.8,428.5 1020.1,428.5 1027.4,428.5 1034.6,428.5 1041.9,428.5 1049.2,428.5 1056.5,428.5 1063.8,428.5 1071.1,428.5 1078.4,428.5 1085.7,428.5 1093.0,428.5 1100.3,428.5 1107.5,428.5 1114.8,428.5 1122.1,428.5 1129.4,428.5 1136.7,428.5 1144.0,428.5 1151.3,426.8 1158.6,428.5 1165.9,428.5 1173.1,428.5 1180.4,428.5 1187.7,428.5 1195.0,428.5 1202.3,428.5 1209.6,428.5 1216.9,428.5 1224.2,428.5 1231.5,428.5 1238.7,428.5 1246.0,428.5 1253.3,428.5 1260.6,428.5 1267.9,428.5 1275.2,428.5 1282.5,428.5 1289.8,428.5 1297.1,428.5 1304.3,428.5 1311.6,428.5 1318.9,428.5 1326.2,428.5 1333.5,428.5 1340.8,428.5 1348.1,428.5 1355.4,428.5 1362.7,428.5 1370.0,427.0 1377.2,428.5 1384.5,428.5 1391.8,428.5 1399.1,428.5 1406.4,428.5 1413.7,428.5 1421.0,428.5 1428.3,428.5 1435.6,428.5 1442.8,428.5 1450.1,428.5 1457.4,428.5 1464.7,428.5 1472.0,428.5"/>
<line x1="1520.5" x2="1529.0" y1="339.50" y2="339.50" stroke="#dcdcdc" stroke-width="1"/>
<line x1="1529.0" x2="2077.3" y1="339.50" y2="339.50" stroke="#efefef" stroke-width="1"/>
<line x1="1520.5" x2="1529.0" y1="383.50" y2="383.50" stroke="#dcdcdc" stroke-width="1"/>
<line x1="1529.0" x2="2077.3" y1="383.50" y2="383.50" stroke="#efefef" stroke-width="1"/>
<line x1="1520.5" x2="1529.0" y1="428.50" y2="428.50" stroke="#dcdcdc" stroke-width="1"/>
<line x1="1529.0" x2="2077.3" y1="428.50" y2="428.50" stroke="#efefef" stroke-width="1"/>
<polyline fill="none" stroke="#9ccc65" stroke-width="1.0" stroke-linejoin="round" points="1529.0,410.6 1536.4,419.6 1543.8,428.5 1551.2,410.6 1558.6,419.6 1566.0,419.6 1573.5,428.5 1580.9,410.6 1588.3,419.6 1595.7,419.6 1603.1,428.5 1610.5,410.6 1617.9,428.5 1625.3,410.6 1632.7,419.6 1640.1,419.6 1647.6,428.5 1655.0,410.6 1662.4,428.5 1669.8,410.6 1677.2,419.6 1684.6,428.5 1692.0,410.6 1699.4,419.6 1706.8,428.5 1714.2,410.6 1721.6,428.5 1729.1,410.6 1736.5,419.6 1743.9,428.5 1751.3,327.4 1758.7,419.6 1766.1,428.5 1773.5,410.6 1780.9,428.5 1788.3,410.6 1795.7,428.5 1803.2,410.6 1810.6,419.6 1818.0,428.5 1825.4,410.6 1832.8,419.6 1840.2,419.6 1847.6,428.5 1855.0,410.6 1862.4,419.6 1869.8,428.5 1877.2,410.6 1884.7,428.5 1892.1,410.6 1899.5,419.6 1906.9,419.6 1914.3,419.6 1921.7,428.5 1929.1,410.6 1936.5,428.5 1943.9,410.6 1951.3,419.6 1958.7,428.5 1966.2,410.6 1973.6,338.1 1981.0,428.5 1988.4,410.6 1995.8,419.6 2003.2,428.5 2010.6,410.6 2018.0,419.6 2025.4,428.5 2032.8,410.6 2040.3,419.6 2047.7,419.6 2055.1,419.6 2062.5,428.5 2069.9,410.6 2077.3,428.5"/>
<polyline fill="none" stroke="#1fbfd6" stroke-width="1.0" stroke-linejoin="round" points="1529.0,428.5 2077.3,428.5"/>
</svg>
<svg class="b" style="left:0;top:0" width="2111" height="793" viewBox="0 0 2111 793" fill="none">
<!-- title globe -->
<circle cx="11.4" cy="9" r="5.7" fill="#5c6161"/>
<path d="M7.4 7.6c0.6-1.6 2-2.6 3.4-2.9c0.3 0.5 0.2 1.2-0.3 1.6c-0.6 0.5-0.5 1.3 0.2 1.7c0.9 0.5 2.4 0.4 3 1.3c0.6 0.9 0.9 1.8 1.4 2.1c-0.8 1.5-2.2 2.3-3.4 2.4c-0.2-0.8 0.3-1.5 0.2-2.2c-0.1-0.8-1-1-1.7-1.4c-0.9-0.5-1-1.6-2-1.9c-0.4-0.1-0.7-0.3-0.8-0.7z" fill="#f2f4f6"/>
<!-- window controls -->
<path d="M2013 8.6h8.2" stroke="#1a1a1a" stroke-width="1"/>
<path d="M2051.2 6.6h6.2v6h-6.2z M2053 6.4v-1.6h6.2v6h-1.6" stroke="#1a1a1a" stroke-width="1"/>
<path d="M2089 4.5l8 8M2097 4.5l-8 8" stroke="#1a1a1a" stroke-width="1.1"/>
<!-- panel close -->
<path d="M2095.4 50.4l6.8 6.6M2102.2 50.4l-6.8 6.6" stroke="#111" stroke-width="2"/>
<!-- toolbar: query tool -->
<g fill="#3f3f3f">
<ellipse cx="147" cy="49.9" rx="5.7" ry="2.1"/>
<path d="M141.3 51.6c1.2 1.5 10.2 1.5 11.4 0v2.2c-0.6 0.6-1.8 1-3.3 1.2v1.3c-3 0.3-6.8-0.2-8.1-1.5z"/>
<path d="M141.3 55.9c1.3 1.3 5 1.8 8.1 1.5v2.9c-3 0.3-6.800-0.100-8.100-1.500z"/>
<path d="M150 54.300l4 3.200l-4 3.200z"/>
</g>
<!-- toolbar: view data -->
<g stroke="#3f3f3f" stroke-width="1.1">
<rect x="166.500" y="50.300" width="11.700" height="9.800" rx="0.800"/>
<path d="M166.500 51.200h11.700" stroke-width="2.200"/>
<path d="M170.400 52v8.100M174.300 52v8.100M166.500 54.900h11.700M166.500 57.500h11.700"/>
</g>
<!-- toolbar: filtered rows -->
<path d="M190.600 49.400h10.300v1l-4.300 4.200v4.600l-1.900-1.300v-3.300l-4.100-4.200z" fill="#3f3f3f"/>
<g stroke="#3f3f3f" stroke-width="0.9">
<rect x="197.300" y="53.700" width="6.400" height="5.400" rx="0.600" fill="#fff"/>
<path d="M197.300 54.400h6.400" stroke-width="1.500"/>
<path d="M199.500 54.500v4.600M201.600 54.500v4.600M197.300 56.700h6.400"/>
</g>
<!-- toolbar: search -->
<circle cx="220.100" cy="51" r="4.200" stroke="#3f3f3f" stroke-width="1.700"/>
<path d="M223.200 54.100l4.500 4.500" stroke="#3f3f3f" stroke-width="1.900" stroke-linecap="round"/>
<!-- toolbar: psql -->
<path d="M239.900 49.600l5.400 4l-5.400 4" stroke="#3f3f3f" stroke-width="1.600"/>
<path d="M246 57.700h8" stroke="#3f3f3f" stroke-width="1.500"/>
<!-- tree chevrons -->
<path d="M10.800 77.700l3 2.800l3-2.800" stroke="#2b2b2b" stroke-width="1.700"/>
<path d="M23.900 96.200l2.900 3l-2.900 3" stroke="#2b2b2b" stroke-width="1.700"/>
<!-- server group -->
<g stroke="#8f8ea6" stroke-width="1" fill="#f1f0f6">
<rect x="25.500" y="72" width="10.300" height="3.300" rx="1.200"/>
<rect x="25.500" y="75.900" width="10.300" height="3.300" rx="1.200"/>
<rect x="25.500" y="79.800" width="10.300" height="3.300" rx="1.200"/>
</g>
<!-- elephant -->
<g stroke="#3a72b8" stroke-width="1.05" fill="#f4f9fe" stroke-linejoin="round">
<path d="M40.300 91.300c-2.400-0.800-4.700 0.300-4.600 3.100c0.100 2.600 1 5.200 2.400 5.900c1 0.500 1.800-0.400 2.200-1.600"/>
<path d="M44.600 91.300c2.200-0.900 4.400 0.300 4.100 2.900c-0.200 2-1.100 3.900-2 5c0.600 0.300 1.400 0.200 1.800 0.100c-0.600 0.900-1.900 1.100-2.700 0.600"/>
<path d="M40.300 91.300c1.400-0.600 3-0.600 4.300 0c1 1 1.300 2.400 1.100 3.800c-0.200 1.500-0.300 2.800-0.100 4.200c0.200 1.700-0.300 3.800-1.700 4c-1.300 0.200-1.900-1-2-2.300c-0.100-1.200 0-2-0.500-2.900c-0.700-1.300-1.600-2.300-1.700-3.900c-0.100-1.200 0.100-2.200 0.600-2.900z"/>
<path d="M42.500 94.300c0.500-0.300 1.100-0.200 1.300 0.200" fill="none"/>
</g>
<!-- refresh -->
<path d="M2072.600 476.600a4.500 4.500 0 0 0-8 3.600" stroke="#222" stroke-width="1.400"/>
<path d="M2062.100 479.800h5l-2.500 3.100z" fill="#222"/>
<path d="M2065.600 484.600a4.500 4.500 0 0 0 8-3.600" stroke="#222" stroke-width="1.400"/>
<path d="M2071.100 481.400h5l-2.500-3.100z" fill="#222"/>
</svg>

</body></html>
